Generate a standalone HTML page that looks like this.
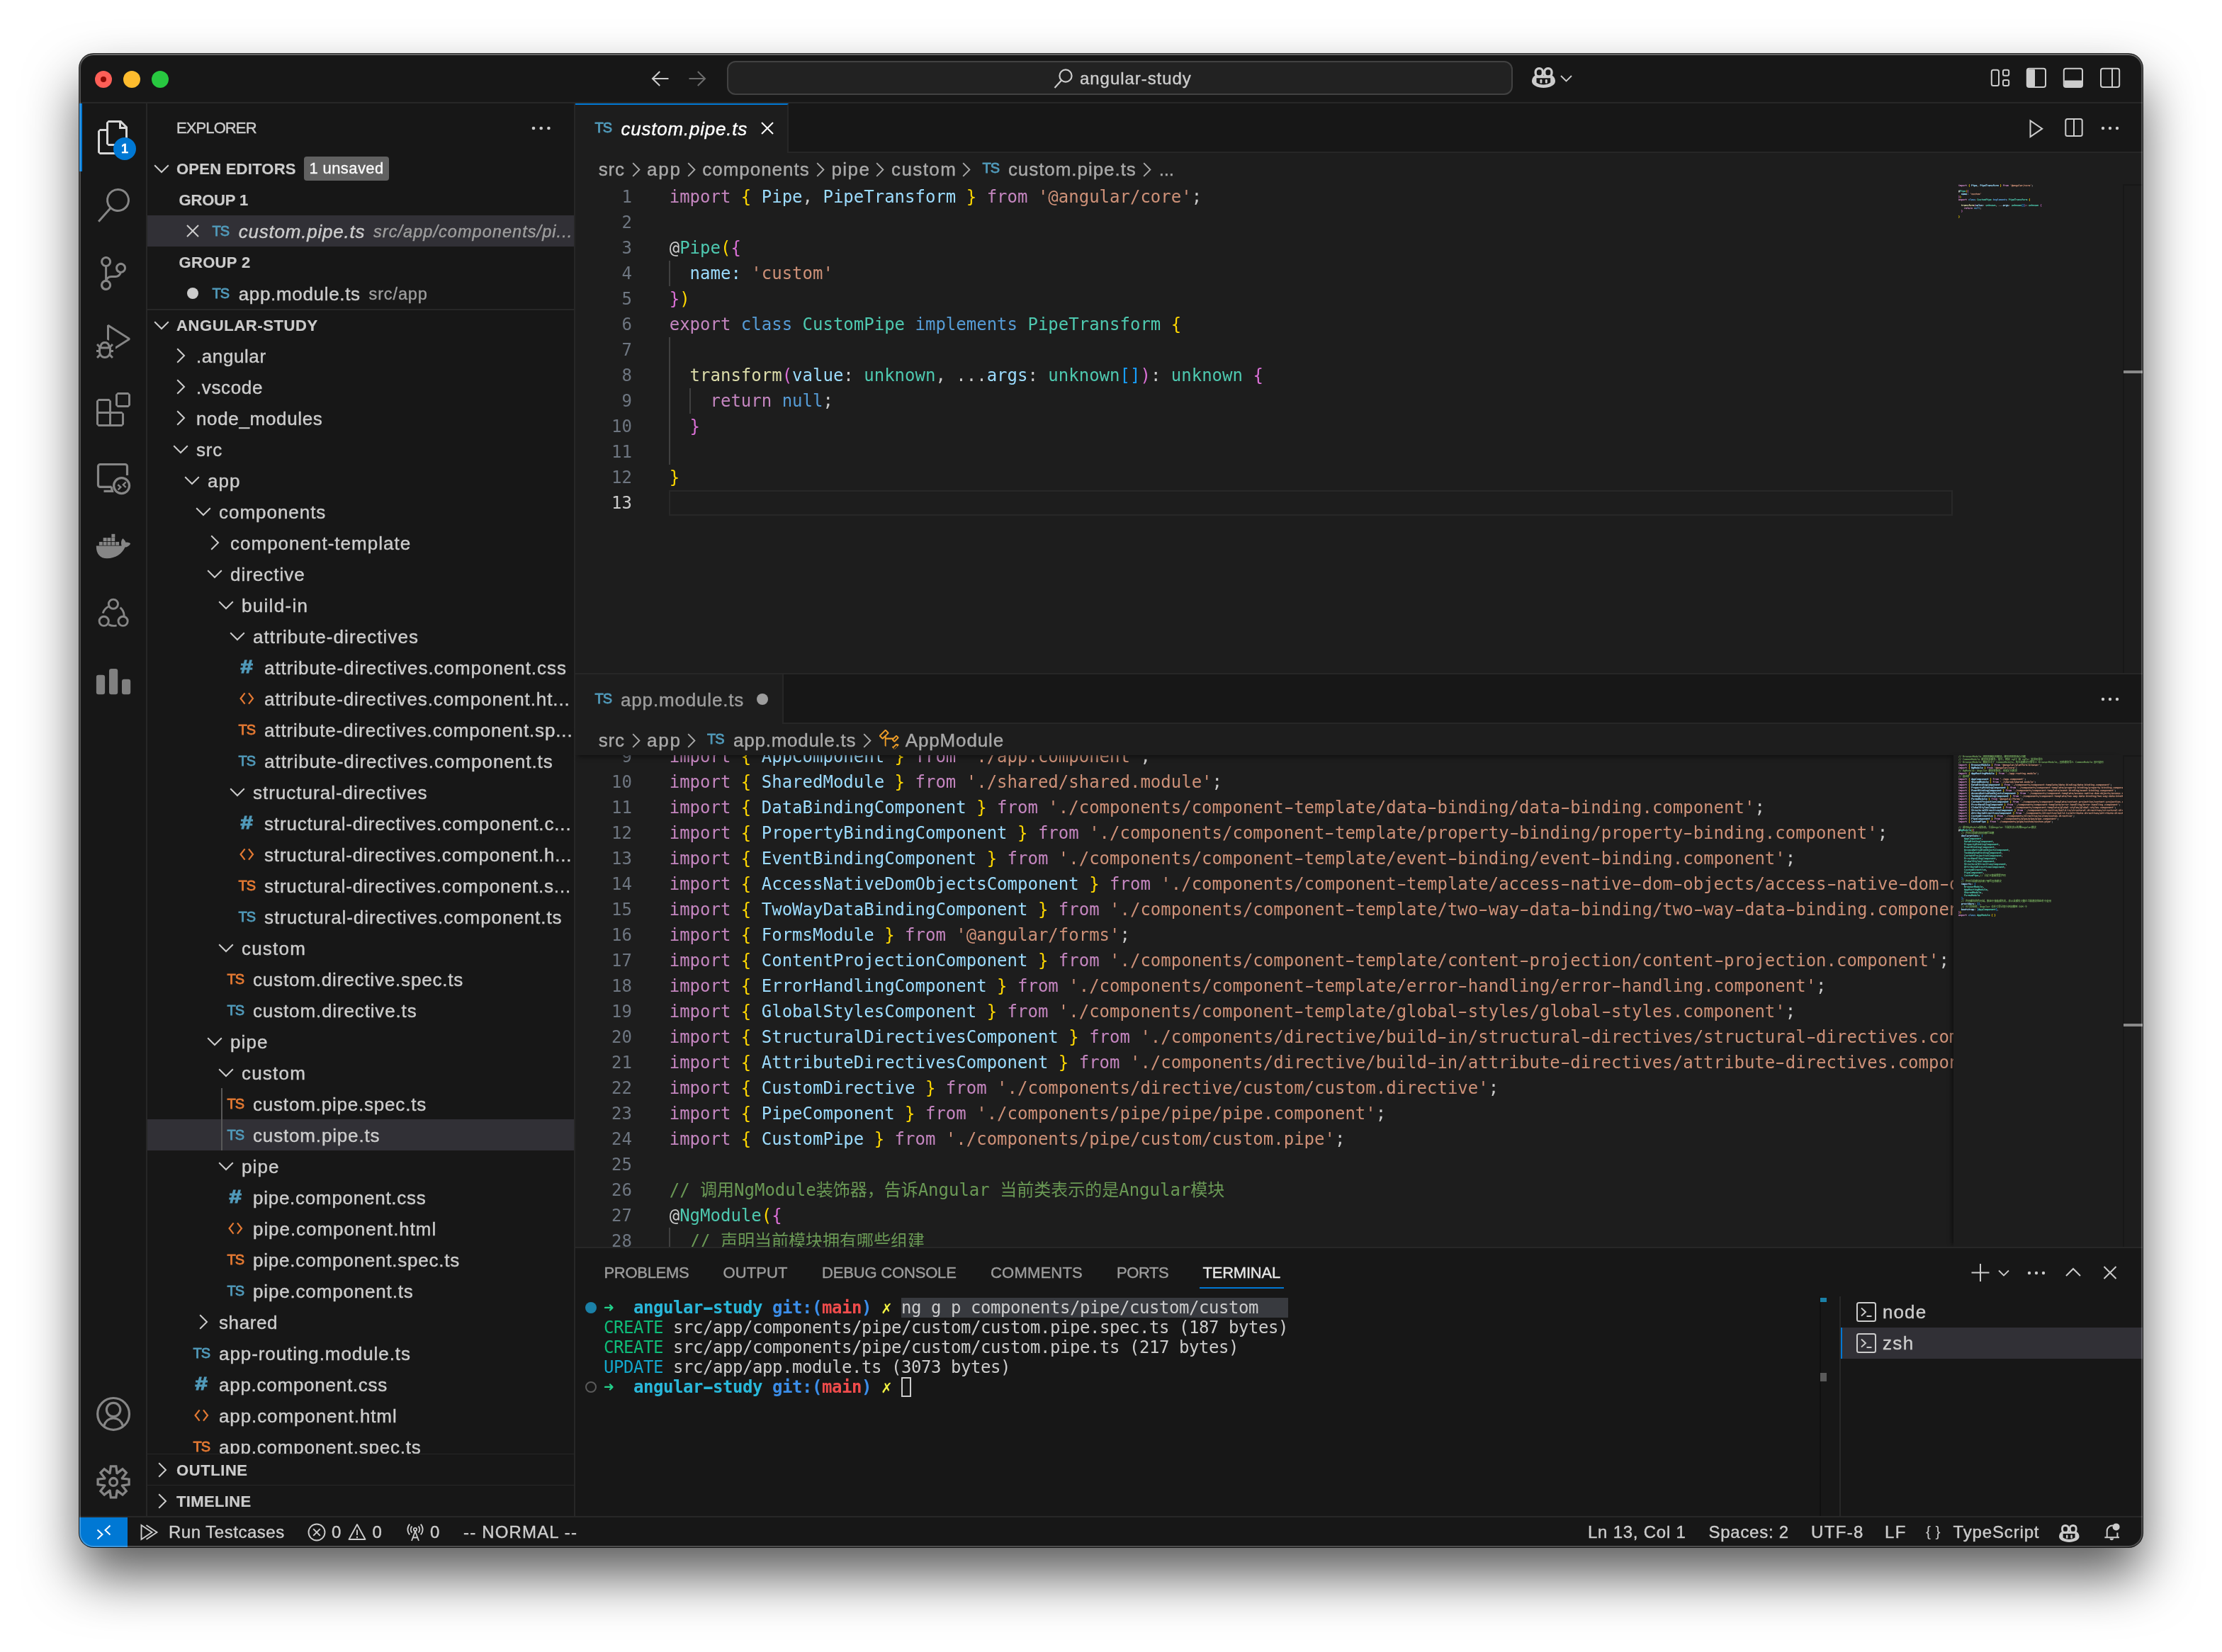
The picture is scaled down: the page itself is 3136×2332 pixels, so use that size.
<!DOCTYPE html><html lang="en"><head><meta charset="utf-8"><title>custom.pipe.ts — angular-study</title><style>
*{box-sizing:border-box;margin:0;padding:0}
html,body{width:3136px;height:2332px;overflow:hidden;background:#fff}
body{font-family:"Liberation Sans",sans-serif;color:#ccc;position:relative;-webkit-text-stroke:.4px}
.mono{-webkit-text-stroke:0}
#win{position:absolute;left:112px;top:76px;width:2912px;height:2108px;border-radius:20px;background:#171717;overflow:hidden;
 box-shadow:0 0 0 1px rgba(0,0,0,.85),0 41px 76px rgba(0,0,0,.64)}
#win:after{content:"";position:absolute;inset:0;border-radius:20px;box-shadow:inset 0 0 0 2px rgba(255,255,255,.24),inset 0 2px 0 0 rgba(255,255,255,.13);pointer-events:none;z-index:50}
#o{position:absolute;left:-112px;top:-76px;width:3136px;height:2332px;will-change:transform}
#o div,#o span.a,#o svg.a{position:absolute}
svg{display:block;overflow:visible}
.mono{font-family:"DejaVu Sans Mono","Noto Sans CJK SC",monospace}
/* title bar */
#tb{left:112px;top:76px;width:2912px;height:70px;border-bottom:2px solid #272727;background:#171717}
.tl{width:24px;height:24px;border-radius:50%;top:100px}
#cc{left:1026px;top:86px;width:1109px;height:48px;border:2px solid #424242;border-radius:12px;background:#222222}
/* activity */
#ab{left:112px;top:146px;width:96px;height:1994px;border-right:2px solid #272727;background:#171717}
/* sidebar */
#sb{left:208px;top:146px;width:604px;height:1994px;background:#171717;border-right:2px solid #272727;overflow:hidden}
.row{left:208px;width:602px;height:44px;line-height:44px;font-size:26px;white-space:nowrap;overflow:hidden}
.row .lb{position:absolute;top:.5px;letter-spacing:.8px;color:#ccc}
.hdr{font-weight:bold;font-size:22px;color:#ccc;letter-spacing:.3px;-webkit-text-stroke:.2px}
.ts{font-size:20px;letter-spacing:-.9px;-webkit-text-stroke:.8px}
.cb{color:#519aba}.co{color:#e37933}
/* editor */
.ed{background:#1d1d1d}
.tabs{background:#171717;border-bottom:2px solid #272727}
.ln{color:#6e7681;text-align:right;width:80px;font-size:24px;line-height:36px;height:36px;white-space:pre}
.cl{font-size:24px;line-height:36px;height:36px;white-space:pre;color:#ccc;}
.k{color:#c586c0}.b1{color:#ffd700}.b2{color:#da70d6}.b3{color:#179fff}.v{color:#9cdcfe}.s{color:#ce9178}.t{color:#4ec9b0}.kw{color:#569cd6}.f{color:#dcdcaa}.c{color:#6a9955}
.bc{margin-top:.8px;font-size:26px;line-height:44px;height:44px;color:#a9a9a9;white-space:nowrap;letter-spacing:.6px}
.ig{width:2px;background:#404040}
/* minimap */
.mm{font-size:3.375px;line-height:4px;white-space:pre;overflow:hidden;-webkit-text-stroke:.18px !important}
.mm div{position:static !important;height:4px}
/* panel */
.pt{font-size:22px;line-height:44px;top:1775px;color:#9d9d9d;letter-spacing:.2px;white-space:nowrap}
.tl2{font-size:24px;line-height:28px;height:28px;white-space:pre;left:824px;color:#ccc}
/* status */
#st{left:112px;top:2140px;width:2912px;height:44px;border-top:2px solid #272727;background:#171717}
.si{top:2142px;font-size:24px;line-height:42px;height:42px;color:#ccc;white-space:nowrap;letter-spacing:.35px}

.hy{display:inline-block;font-style:normal;transform:scaleX(1.65)}

</style></head><body>
<div id="win"><div id="o">
<div id="tb"></div>
<div class="tl" style="left:134px;background:#fe5f57"></div><div style="left:142px;top:108px;width:8px;height:8px;border-radius:50%;background:#8c0a04"></div>
<div class="tl" style="left:174px;background:#febc2e"></div>
<div class="tl" style="left:214px;background:#28c840"></div>
<svg class="a" style="left:918px;top:97px" width="28" height="28" viewBox="0 0 28 28" fill="none" stroke="#cccccc" stroke-width="2.1"><path d="M25.5 14H3.5M13.2 4L3 14L13.2 24"/></svg>
<svg class="a" style="left:970px;top:97px" width="28" height="28" viewBox="0 0 28 28" fill="none" stroke="#6b6b6b" stroke-width="2.1"><path d="M2.5 14H24.5M14.8 4L25 14L14.8 24"/></svg>
<div id="cc"></div>
<svg class="a" style="left:1487px;top:96px" width="28" height="30" viewBox="0 0 28 30" fill="none" stroke="#cccccc" stroke-width="2.2"><circle cx="17" cy="11" r="8.6"/><path d="M11 17.5L1.5 28"/></svg>
<div id="tt" style="left:1524px;top:88px;font-size:24px;line-height:46px;color:#ccc;letter-spacing:.95px;white-space:nowrap">angular-study</div>
<svg class="a" style="left:2161.5px;top:95.3px" width="33" height="29" viewBox="0 0 33 29"><path d="M4.5 11.5C1.2 13.6 0 16.6 0 19.8C0 25 7.6 29 16.5 29C25.4 29 33 25 33 19.8C33 16.6 31.8 13.6 28.5 11.5Z" fill="#ccc"/><path d="M6.5 15.2H26.2V21.6C21.8 25.4 10.9 25.4 6.5 21.6Z" fill="#171717"/><rect x="11.5" y="16.9" width="2.9" height="5.9" rx="1.45" fill="#ccc"/><rect x="18.9" y="16.9" width="2.9" height="5.9" rx="1.45" fill="#ccc"/><rect x="5.2" y="1.7" width="10.2" height="11.2" rx="4.6" fill="#171717" stroke="#ccc" stroke-width="3.3"/><rect x="17.8" y="1.7" width="10.2" height="11.2" rx="4.6" fill="#171717" stroke="#ccc" stroke-width="3.3"/></svg>
<svg class="a" style="left:2202px;top:106px" width="17" height="10" viewBox="0 0 17 10" fill="none" stroke="#ccc" stroke-width="1.8"><path d="M1 1L8.5 8.5L16 1"/></svg>
<svg class="a" style="left:2808px;top:94px" width="186" height="32" viewBox="2808 94 186 32" fill="none" stroke="#ccc" stroke-width="2">
<rect x="2810.8" y="98.8" width="10.2" height="22.2" rx="2.5"/><rect x="2827" y="98.8" width="8.2" height="8" rx="2.2"/><rect x="2827" y="113" width="8.2" height="8" rx="2.2"/>
<rect x="2860.8" y="96.8" width="26.2" height="26.2" rx="3"/><path d="M2861 98.5h10.5v23H2861z" fill="#ccc" stroke-width="1"/>
<rect x="2912.8" y="96.8" width="26.2" height="26.2" rx="3"/><path d="M2914 114h24v8h-24z" fill="#ccc" stroke-width="1"/>
<rect x="2965" y="96.8" width="26.2" height="26.2" rx="3"/><path d="M2981 97v26"/>
</svg>

<div id="ab"></div>
<div style="left:112px;top:146px;width:4px;height:96px;background:#0078d4"></div>
<svg class="a" style="left:136px;top:170px" width="48" height="48" viewBox="0 0 24 24" fill="#d7d7d7"><path d="M17.5 0h-9L7 1.5V6H2.5L1 7.5v15.07L2.5 24h12.07L16 22.57V18h4.7l1.3-1.43V4.5L17.5 0zm0 2.12l2.38 2.38H17.5V2.12zm-3 20.38h-12v-15H7v9.07L8.5 18h6v4.5zm6-6h-12v-15H16V6h4.5v10.5z"/></svg>
<svg class="a" style="left:136px;top:266px" width="48" height="48" viewBox="0 0 24 24" fill="#868686"><path d="M15.25 0a8.25 8.25 0 0 0-6.18 13.72L1 22.88l1.12 1 8.05-9.12A8.251 8.251 0 1 0 15.25.01V0zm0 15a6.75 6.75 0 1 1 0-13.5 6.75 6.75 0 0 1 0 13.5z"/></svg>
<svg class="a" style="left:136px;top:362px" width="48" height="48" viewBox="0 0 24 24" fill="#868686"><path d="M21.007 8.222A3.738 3.738 0 0 0 15.045 5.2a3.737 3.737 0 0 0 1.156 6.583 2.988 2.988 0 0 1-2.668 1.67h-2.99a4.456 4.456 0 0 0-2.989 1.165V7.4a3.737 3.737 0 1 0-1.494 0v9.117a3.776 3.776 0 1 0 1.816.099 2.99 2.99 0 0 1 2.668-1.667h2.99a4.484 4.484 0 0 0 4.223-3.039 3.736 3.736 0 0 0 3.25-3.687zM4.565 3.738a2.242 2.242 0 1 1 4.484 0 2.242 2.242 0 0 1-4.484 0zm4.484 16.441a2.242 2.242 0 1 1-4.484 0 2.242 2.242 0 0 1 4.484 0zm8.221-9.715a2.242 2.242 0 1 1 0-4.485 2.242 2.242 0 0 1 0 4.485z"/></svg>
<svg class="a" style="left:136px;top:458px" width="48" height="48" viewBox="0 0 24 24" fill="#868686"><path d="M10.94 13.5l-1.32 1.32a3.73 3.73 0 0 0-7.24 0L1.06 13.5 0 14.56l1.72 1.72-.22.22V18H0v1.5h1.5v.08c.077.489.214.966.41 1.42L0 22.94 1.06 24l1.65-1.65A4.308 4.308 0 0 0 6 24a4.31 4.31 0 0 0 3.29-1.65L10.94 24 12 22.94 10.09 21c.198-.464.336-.951.41-1.45v-.1H12V18h-1.5v-1.5l-.22-.22L12 14.56l-1.06-1.06zM6 13.5a2.25 2.25 0 0 1 2.25 2.25h-4.5A2.25 2.25 0 0 1 6 13.5zm3 6a3.33 3.33 0 0 1-3 3 3.33 3.33 0 0 1-3-3v-2.25h6v2.25zm14.76-9.9v1.26L13.5 17.37V15.6l8.5-5.37L9 2v9.46a5.07 5.07 0 0 0-1.5-.72V.63L8.64 0l15.12 9.6z"/></svg>
<svg class="a" style="left:136px;top:554px" width="48" height="48" viewBox="0 0 24 24" fill="#868686"><path d="M13.5 1.5L15 0h7.5L24 1.5V9l-1.5 1.5H15L13.5 9V1.5zm1.5 0V9h7.5V1.5H15zM0 15V6l1.5-1.5H9L10.5 6v7.5H18l1.5 1.5v7.5L18 24H1.5L0 22.5V15zm9-1.5V6H1.5v7.5H9zM9 15H1.5v7.5H9V15zm1.5 7.5H18V15h-7.5v7.5z"/></svg>
<div style="left:160px;top:194px;width:32px;height:32px;border-radius:50%;background:#0078d4;color:#fff;font-size:18px;font-weight:bold;line-height:32px;text-align:center">1</div>
<svg class="a" style="left:112px;top:626px" width="96" height="96" viewBox="112 626 96 96" fill="none" stroke="#868686" stroke-width="3.2"><path d="M179.5 671V658.5a3 3 0 0 0-3-3H141.5a3 3 0 0 0-3 3V684.4a3 3 0 0 0 3 3H157.5M146.5 693.4H158.5l-1.5-6"/><circle cx="171.6" cy="685.6" r="11"/><path d="M166.3 684.2L170.3 687.5L166.6 691.5M177.7 680.5L173.8 684.3L177.7 688" stroke-width="2.4"/></svg>
<svg class="a" style="left:112px;top:722px" width="96" height="96" viewBox="112 722 96 96" fill="#868686"><path d="M135.9 770.4L171.6 770.4C170.4 766.2 171 762.5 173.4 760C175.2 761.6 176.9 763.6 177.5 765.7C180.2 765.1 182.6 765.9 184.2 767.4C182.6 770.2 179.6 772.4 176.5 772.6C172 782.2 163 788.3 151 788.3C141 788.3 135.4 781.2 135.9 770.4Z"/><rect x="139.9" y="764.9" width="4.9" height="4.9"/><rect x="145.7" y="764.9" width="4.9" height="4.9"/><rect x="151.5" y="764.9" width="4.9" height="4.9"/><rect x="157.4" y="764.9" width="4.9" height="4.9"/><rect x="163.2" y="764.9" width="4.9" height="4.9"/><rect x="145.7" y="759.1" width="4.9" height="4.9"/><rect x="151.5" y="759.1" width="4.9" height="4.9"/><rect x="157.3" y="759.1" width="4.9" height="4.9"/><rect x="157.4" y="753.8" width="4.9" height="4.9"/></svg>
<svg class="a" style="left:112px;top:818px" width="96" height="96" viewBox="112 818 96 96" fill="none" stroke="#868686" stroke-width="2.9"><circle cx="159.9" cy="852.7" r="6.6"/><circle cx="146.7" cy="876.8" r="6.6"/><circle cx="173.6" cy="876.8" r="6.6"/><path d="M153 856.2A15.5 15.5 0 0 0 145.2 865.6M169.6 857.6A15.5 15.5 0 0 1 175.2 869.2M153.4 881.6A15.5 15.5 0 0 0 164.6 882.8"/></svg>
<svg class="a" style="left:112px;top:914px" width="96" height="96" viewBox="112 914 96 96" fill="#808080"><rect x="135.9" y="952.8" width="12.2" height="27.4" rx="3.2"/><rect x="154" y="943.9" width="12.2" height="36.3" rx="3.2"/><rect x="172" y="958.7" width="12.2" height="21.5" rx="3.2"/></svg>
<svg class="a" style="left:112px;top:1948px" width="96" height="96" viewBox="112 1948 96 96" fill="none" stroke="#868686" stroke-width="3.2"><circle cx="160.1" cy="1995.9" r="22.4"/><circle cx="160.1" cy="1990" r="9.7"/><path d="M146.6 2013.2C148.5 2006.4 153.6 2002 160.1 2002C166.6 2002 171.7 2006.4 173.6 2013.2"/></svg>
<svg class="a" style="left:112px;top:2044px" width="96" height="96" viewBox="112 2044 96 96" fill="none" stroke="#868686" stroke-width="3.3" stroke-linejoin="miter"><path d="M155.1 2079.5 L156.4 2069.9 L163.8 2069.9 L165.1 2079.5 L165.4 2079.6 L173.0 2073.7 L178.3 2079.0 L172.4 2086.6 L172.5 2086.9 L182.1 2088.2 L182.1 2095.6 L172.5 2096.9 L172.4 2097.2 L178.3 2104.8 L173.0 2110.1 L165.4 2104.2 L165.1 2104.3 L163.8 2113.9 L156.4 2113.9 L155.1 2104.3 L154.8 2104.2 L147.2 2110.1 L141.9 2104.8 L147.8 2097.2 L147.7 2096.9 L138.1 2095.6 L138.1 2088.2 L147.7 2086.9 L147.8 2086.6 L141.9 2079.0 L147.2 2073.7 L154.8 2079.6Z"/><circle cx="160.1" cy="2091.9" r="5.4"/></svg>
<div id="sb"></div>
<div id="sh0" style="left:249px;top:146px;height:70px;line-height:70px;font-size:22px;color:#ccc;letter-spacing:-0.9px;white-space:nowrap">EXPLORER</div>
<svg class="a" style="left:748px;top:176px" width="32" height="10" viewBox="0 0 32 10" fill="#ccc"><circle cx="5" cy="5" r="2.3"/><circle cx="15.7" cy="5" r="2.3"/><circle cx="26.4" cy="5" r="2.3"/></svg>
<div class="row hdr" style="top:216px"><span class="lb" id="sh1" style="left:41px;letter-spacing:0.234px">OPEN EDITORS</span></div>
<svg class="a" style="left:217px;top:231.5px" width="22" height="13" viewBox="0 0 22 13" fill="none" stroke="#ccc" stroke-width="2"><path d="M1.2 1.2L11 11L20.8 1.2"/></svg>
<div style="left:429px;top:221px;width:120px;height:34px;border-radius:4px;background:#616161;color:#f8f8f8;font-size:22px;line-height:34px;text-align:center;letter-spacing:.4px;white-space:nowrap">1 unsaved</div>
<div class="row hdr" style="top:260px"><span class="lb" id="sh2" style="left:44.5px;letter-spacing:-0.167px">GROUP 1</span></div>
<div class="row" style="top:304px;background:#313036"><span class="lb" id="oe0" style="left:128.7px;font-style:italic;letter-spacing:0.784px">custom.pipe.ts</span><span class="lb" id="oe1" style="left:319px;font-style:italic;font-size:23.5px;color:#9d9d9d;letter-spacing:1.055px;top:1px">src/app/components/pi...</span></div>
<svg class="a" style="left:263px;top:317px" width="18" height="18" viewBox="0 0 18 18" fill="none" stroke="#ccc" stroke-width="2"><path d="M1 1L17 17M17 1L1 17"/></svg>
<span class="a ts cb" style="left:299.5px;top:304px;line-height:44px">TS</span>
<div class="row hdr" style="top:348px"><span class="lb" id="sh3" style="left:44.5px;letter-spacing:0.333px">GROUP 2</span></div>
<div class="row" style="top:392px"><span class="lb" id="oe2" style="left:128.7px;letter-spacing:0.675px">app.module.ts</span><span class="lb" id="oe3" style="left:312.5px;font-size:23.5px;color:#9d9d9d;top:1px;letter-spacing:0.883px">src/app</span></div>
<div style="left:264px;top:406px;width:16px;height:16px;border-radius:50%;background:#ccc"></div>
<span class="a ts cb" style="left:299.5px;top:392px;line-height:44px">TS</span>
<div style="left:208px;top:436px;width:602px;height:2px;background:#272727"></div>
<div class="row hdr" style="top:437px"><span class="lb" id="sh4" style="left:41px;letter-spacing:0.609px">ANGULAR-STUDY</span></div>
<svg class="a" style="left:217px;top:452.5px" width="22" height="13" viewBox="0 0 22 13" fill="none" stroke="#ccc" stroke-width="2"><path d="M1.2 1.2L11 11L20.8 1.2"/></svg>
<div style="left:208px;top:480px;width:602px;height:1572px;overflow:hidden"><div style="left:-208px;top:-480px;width:900px;height:2200px">
<div class="row" style="top:480px"><span class="lb" id="tr0" style="left:69px;letter-spacing:0.585px">.angular</span></div>
<svg class="a" style="left:248.5px;top:491px" width="13" height="22" viewBox="0 0 13 22" fill="none" stroke="#ccc" stroke-width="2"><path d="M1.2 1.2L11 11L1.2 20.8"/></svg>
<div class="row" style="top:524px"><span class="lb" id="tr1" style="left:69px;letter-spacing:0.633px">.vscode</span></div>
<svg class="a" style="left:248.5px;top:535px" width="13" height="22" viewBox="0 0 13 22" fill="none" stroke="#ccc" stroke-width="2"><path d="M1.2 1.2L11 11L1.2 20.8"/></svg>
<div class="row" style="top:568px"><span class="lb" id="tr2" style="left:69px;letter-spacing:0.662px">node_modules</span></div>
<svg class="a" style="left:248.5px;top:579px" width="13" height="22" viewBox="0 0 13 22" fill="none" stroke="#ccc" stroke-width="2"><path d="M1.2 1.2L11 11L1.2 20.8"/></svg>
<div class="row" style="top:612px"><span class="lb" id="tr3" style="left:69px;letter-spacing:0.8px">src</span></div>
<svg class="a" style="left:243.5px;top:627.5px" width="22" height="13" viewBox="0 0 22 13" fill="none" stroke="#ccc" stroke-width="2"><path d="M1.2 1.2L11 11L20.8 1.2"/></svg>
<div class="row" style="top:656px"><span class="lb" id="tr4" style="left:85px;letter-spacing:1.05px">app</span></div>
<svg class="a" style="left:259.5px;top:671.5px" width="22" height="13" viewBox="0 0 22 13" fill="none" stroke="#ccc" stroke-width="2"><path d="M1.2 1.2L11 11L20.8 1.2"/></svg>
<div class="row" style="top:700px"><span class="lb" id="tr5" style="left:101px;letter-spacing:0.968px">components</span></div>
<svg class="a" style="left:275.5px;top:715.5px" width="22" height="13" viewBox="0 0 22 13" fill="none" stroke="#ccc" stroke-width="2"><path d="M1.2 1.2L11 11L20.8 1.2"/></svg>
<div class="row" style="top:744px"><span class="lb" id="tr6" style="left:117px;letter-spacing:1.006px">component-template</span></div>
<svg class="a" style="left:296.5px;top:755px" width="13" height="22" viewBox="0 0 13 22" fill="none" stroke="#ccc" stroke-width="2"><path d="M1.2 1.2L11 11L1.2 20.8"/></svg>
<div class="row" style="top:788px"><span class="lb" id="tr7" style="left:117px;letter-spacing:0.985px">directive</span></div>
<svg class="a" style="left:291.5px;top:803.5px" width="22" height="13" viewBox="0 0 22 13" fill="none" stroke="#ccc" stroke-width="2"><path d="M1.2 1.2L11 11L20.8 1.2"/></svg>
<div class="row" style="top:832px"><span class="lb" id="tr8" style="left:133px;letter-spacing:1.301px">build-in</span></div>
<svg class="a" style="left:307.5px;top:847.5px" width="22" height="13" viewBox="0 0 22 13" fill="none" stroke="#ccc" stroke-width="2"><path d="M1.2 1.2L11 11L20.8 1.2"/></svg>
<div class="row" style="top:876px"><span class="lb" id="tr9" style="left:149px;letter-spacing:1.088px">attribute-directives</span></div>
<svg class="a" style="left:323.5px;top:891.5px" width="22" height="13" viewBox="0 0 22 13" fill="none" stroke="#ccc" stroke-width="2"><path d="M1.2 1.2L11 11L20.8 1.2"/></svg>
<div class="row" style="top:920px"><span class="lb" id="tr10" style="left:165px;letter-spacing:0.951px">attribute-directives.component.css</span></div>
<span class="a cb" style="left:338.5px;top:919px;line-height:44px;font-size:25px;font-weight:bold;font-style:italic;-webkit-text-stroke:1.1px;transform:scaleX(1.25);transform-origin:0 50%">#</span>
<div class="row" style="top:964px"><span class="lb" id="tr11" style="left:165px;letter-spacing:0.913px">attribute-directives.component.ht...</span></div>
<svg class="a" style="left:338px;top:977px" width="22" height="18" viewBox="0 0 22 18" fill="none" stroke="#e37933" stroke-width="2.2"><path d="M7.6 1.4L1.6 9L7.6 16.6M13 1.4L19 9L13 16.6"/></svg>
<div class="row" style="top:1008px"><span class="lb" id="tr12" style="left:165px;letter-spacing:0.857px">attribute-directives.component.sp...</span></div>
<span class="a ts co" style="left:336.5px;top:1008px;line-height:44px">TS</span>
<div class="row" style="top:1052px"><span class="lb" id="tr13" style="left:165px;letter-spacing:0.971px">attribute-directives.component.ts</span></div>
<span class="a ts cb" style="left:336.5px;top:1052px;line-height:44px">TS</span>
<div class="row" style="top:1096px"><span class="lb" id="tr14" style="left:149px;letter-spacing:1.0px">structural-directives</span></div>
<svg class="a" style="left:323.5px;top:1111.5px" width="22" height="13" viewBox="0 0 22 13" fill="none" stroke="#ccc" stroke-width="2"><path d="M1.2 1.2L11 11L20.8 1.2"/></svg>
<div class="row" style="top:1140px"><span class="lb" id="tr15" style="left:165px;letter-spacing:0.842px">structural-directives.component.c...</span></div>
<span class="a cb" style="left:338.5px;top:1139px;line-height:44px;font-size:25px;font-weight:bold;font-style:italic;-webkit-text-stroke:1.1px;transform:scaleX(1.25);transform-origin:0 50%">#</span>
<div class="row" style="top:1184px"><span class="lb" id="tr16" style="left:165px;letter-spacing:0.827px">structural-directives.component.h...</span></div>
<svg class="a" style="left:338px;top:1197px" width="22" height="18" viewBox="0 0 22 18" fill="none" stroke="#e37933" stroke-width="2.2"><path d="M7.6 1.4L1.6 9L7.6 16.6M13 1.4L19 9L13 16.6"/></svg>
<div class="row" style="top:1228px"><span class="lb" id="tr17" style="left:165px;letter-spacing:0.829px">structural-directives.component.s...</span></div>
<span class="a ts co" style="left:336.5px;top:1228px;line-height:44px">TS</span>
<div class="row" style="top:1272px"><span class="lb" id="tr18" style="left:165px;letter-spacing:0.936px">structural-directives.component.ts</span></div>
<span class="a ts cb" style="left:336.5px;top:1272px;line-height:44px">TS</span>
<div class="row" style="top:1316px"><span class="lb" id="tr19" style="left:133px;letter-spacing:1.2px">custom</span></div>
<svg class="a" style="left:307.5px;top:1331.5px" width="22" height="13" viewBox="0 0 22 13" fill="none" stroke="#ccc" stroke-width="2"><path d="M1.2 1.2L11 11L20.8 1.2"/></svg>
<div class="row" style="top:1360px"><span class="lb" id="tr20" style="left:149px;letter-spacing:0.823px">custom.directive.spec.ts</span></div>
<span class="a ts co" style="left:320.5px;top:1360px;line-height:44px">TS</span>
<div class="row" style="top:1404px"><span class="lb" id="tr21" style="left:149px;letter-spacing:0.856px">custom.directive.ts</span></div>
<span class="a ts cb" style="left:320.5px;top:1404px;line-height:44px">TS</span>
<div class="row" style="top:1448px"><span class="lb" id="tr22" style="left:117px;letter-spacing:1.133px">pipe</span></div>
<svg class="a" style="left:291.5px;top:1463.5px" width="22" height="13" viewBox="0 0 22 13" fill="none" stroke="#ccc" stroke-width="2"><path d="M1.2 1.2L11 11L20.8 1.2"/></svg>
<div class="row" style="top:1492px"><span class="lb" id="tr23" style="left:133px;letter-spacing:1.2px">custom</span></div>
<svg class="a" style="left:307.5px;top:1507.5px" width="22" height="13" viewBox="0 0 22 13" fill="none" stroke="#ccc" stroke-width="2"><path d="M1.2 1.2L11 11L20.8 1.2"/></svg>
<div class="row" style="top:1536px"><span class="lb" id="tr24" style="left:149px;letter-spacing:0.8px">custom.pipe.spec.ts</span></div>
<span class="a ts co" style="left:320.5px;top:1536px;line-height:44px">TS</span>
<div class="row" style="top:1580px;background:#313036"><span class="lb" id="tr25" style="left:149px;letter-spacing:0.838px">custom.pipe.ts</span></div>
<span class="a ts cb" style="left:320.5px;top:1580px;line-height:44px">TS</span>
<div class="row" style="top:1624px"><span class="lb" id="tr26" style="left:133px;letter-spacing:1.134px">pipe</span></div>
<svg class="a" style="left:307.5px;top:1639.5px" width="22" height="13" viewBox="0 0 22 13" fill="none" stroke="#ccc" stroke-width="2"><path d="M1.2 1.2L11 11L20.8 1.2"/></svg>
<div class="row" style="top:1668px"><span class="lb" id="tr27" style="left:149px;letter-spacing:0.739px">pipe.component.css</span></div>
<span class="a cb" style="left:322.5px;top:1667px;line-height:44px;font-size:25px;font-weight:bold;font-style:italic;-webkit-text-stroke:1.1px;transform:scaleX(1.25);transform-origin:0 50%">#</span>
<div class="row" style="top:1712px"><span class="lb" id="tr28" style="left:149px;letter-spacing:0.938px">pipe.component.html</span></div>
<svg class="a" style="left:322px;top:1725px" width="22" height="18" viewBox="0 0 22 18" fill="none" stroke="#e37933" stroke-width="2.2"><path d="M7.6 1.4L1.6 9L7.6 16.6M13 1.4L19 9L13 16.6"/></svg>
<div class="row" style="top:1756px"><span class="lb" id="tr29" style="left:149px;letter-spacing:0.798px">pipe.component.spec.ts</span></div>
<span class="a ts co" style="left:320.5px;top:1756px;line-height:44px">TS</span>
<div class="row" style="top:1800px"><span class="lb" id="tr30" style="left:149px;letter-spacing:0.83px">pipe.component.ts</span></div>
<span class="a ts cb" style="left:320.5px;top:1800px;line-height:44px">TS</span>
<div class="row" style="top:1844px"><span class="lb" id="tr31" style="left:101px;letter-spacing:0.6px">shared</span></div>
<svg class="a" style="left:280.5px;top:1855px" width="13" height="22" viewBox="0 0 13 22" fill="none" stroke="#ccc" stroke-width="2"><path d="M1.2 1.2L11 11L1.2 20.8"/></svg>
<div class="row" style="top:1888px"><span class="lb" id="tr32" style="left:101px;letter-spacing:0.925px">app-routing.module.ts</span></div>
<span class="a ts cb" style="left:272.5px;top:1888px;line-height:44px">TS</span>
<div class="row" style="top:1932px"><span class="lb" id="tr33" style="left:101px;letter-spacing:0.738px">app.component.css</span></div>
<span class="a cb" style="left:274.5px;top:1931px;line-height:44px;font-size:25px;font-weight:bold;font-style:italic;-webkit-text-stroke:1.1px;transform:scaleX(1.25);transform-origin:0 50%">#</span>
<div class="row" style="top:1976px"><span class="lb" id="tr34" style="left:101px;letter-spacing:0.888px">app.component.html</span></div>
<svg class="a" style="left:274px;top:1989px" width="22" height="18" viewBox="0 0 22 18" fill="none" stroke="#e37933" stroke-width="2.2"><path d="M7.6 1.4L1.6 9L7.6 16.6M13 1.4L19 9L13 16.6"/></svg>
<div class="row" style="top:2020px"><span class="lb" id="tr35" style="left:101px;letter-spacing:0.8px">app.component.spec.ts</span></div>
<span class="a ts co" style="left:272.5px;top:2020px;line-height:44px">TS</span>
<div style="left:312px;top:1536px;width:2px;height:88px;background:#585858"></div>
</div></div>
<div style="left:208px;top:2052px;width:602px;height:2px;background:#272727"></div>
<div class="row hdr" style="top:2053px;background:#171717"><span class="lb" id="sh_OUTLINE" style="left:41px;letter-spacing:0.583px">OUTLINE</span></div>
<svg class="a" style="left:222.5px;top:2064px" width="13" height="22" viewBox="0 0 13 22" fill="none" stroke="#ccc" stroke-width="2"><path d="M1.2 1.2L11 11L1.2 20.8"/></svg>
<div style="left:208px;top:2096px;width:602px;height:2px;background:#272727"></div>
<div class="row hdr" style="top:2097px;background:#171717"><span class="lb" id="sh_TIMELINE" style="left:41px;letter-spacing:0.357px">TIMELINE</span></div>
<svg class="a" style="left:222.5px;top:2108px" width="13" height="22" viewBox="0 0 13 22" fill="none" stroke="#ccc" stroke-width="2"><path d="M1.2 1.2L11 11L1.2 20.8"/></svg>
<div class="ed" style="left:812px;top:146px;width:2212px;height:1616px"></div>
<div class="tabs" style="left:812px;top:146px;width:2212px;height:70px"></div>
<div style="left:812px;top:146px;width:301px;height:70px;background:#1d1d1d;border-top:2px solid #0078d4;border-right:2px solid #272727"></div>
<span class="a" style="left:839.5px;top:146px;line-height:68px;color:#519aba;font-size:20px;letter-spacing:-.9px;-webkit-text-stroke:.8px">TS</span>
<div id="tb1" style="left:876.5px;top:147px;line-height:70px;font-size:26px;font-style:italic;color:#fff;letter-spacing:0.788px;white-space:nowrap">custom.pipe.ts</div>
<svg class="a" style="left:1074px;top:172px" width="18" height="18" viewBox="0 0 18 18" fill="none" stroke="#fff" stroke-width="2"><path d="M1 1L17 17M17 1L1 17"/></svg>
<svg class="a" style="left:2860px;top:164px" width="136" height="34" viewBox="2860 164 136 34" fill="none" stroke="#ccc" stroke-width="2"><path d="M2865.5 170.3V193L2882.2 181.7Z" stroke-linejoin="miter"/><rect x="2915.3" y="168" width="23.4" height="24" rx="2.5"/><path d="M2927 168v24"/><g fill="#ccc" stroke="none"><circle cx="2968" cy="181" r="2.2"/><circle cx="2978" cy="181" r="2.2"/><circle cx="2988" cy="181" r="2.2"/></g></svg>
<div class="bc" id="b1a" style="left:844.7px;top:216px;letter-spacing:0.85px;">src</div>
<div class="bc" id="b1b" style="left:913px;top:216px;letter-spacing:1.85px;">app</div>
<div class="bc" id="b1c" style="left:991.2px;top:216px;letter-spacing:0.989px;">components</div>
<div class="bc" id="b1d" style="left:1173.4px;top:216px;letter-spacing:1.433px;">pipe</div>
<div class="bc" id="b1e" style="left:1258px;top:216px;letter-spacing:1.4px;">custom</div>
<div class="bc" id="b1f" style="left:1422.9px;top:216px;letter-spacing:0.947px;">custom.pipe.ts</div>
<div class="bc" id="b1g" style="left:1635.7px;top:216px;letter-spacing:-0.15px;">...</div>
<svg class="a" style="left:891.9px;top:228.5px" width="12" height="21" viewBox="0 0 12 21" fill="none" stroke="#a9a9a9" stroke-width="1.9"><path d="M1.2 1.2L10.4 10.5L1.2 19.8"/></svg>
<svg class="a" style="left:969.6px;top:228.5px" width="12" height="21" viewBox="0 0 12 21" fill="none" stroke="#a9a9a9" stroke-width="1.9"><path d="M1.2 1.2L10.4 10.5L1.2 19.8"/></svg>
<svg class="a" style="left:1151.8px;top:228.5px" width="12" height="21" viewBox="0 0 12 21" fill="none" stroke="#a9a9a9" stroke-width="1.9"><path d="M1.2 1.2L10.4 10.5L1.2 19.8"/></svg>
<svg class="a" style="left:1236px;top:228.5px" width="12" height="21" viewBox="0 0 12 21" fill="none" stroke="#a9a9a9" stroke-width="1.9"><path d="M1.2 1.2L10.4 10.5L1.2 19.8"/></svg>
<svg class="a" style="left:1357.7px;top:228.5px" width="12" height="21" viewBox="0 0 12 21" fill="none" stroke="#a9a9a9" stroke-width="1.9"><path d="M1.2 1.2L10.4 10.5L1.2 19.8"/></svg>
<svg class="a" style="left:1613px;top:228.5px" width="12" height="21" viewBox="0 0 12 21" fill="none" stroke="#a9a9a9" stroke-width="1.9"><path d="M1.2 1.2L10.4 10.5L1.2 19.8"/></svg>
<span class="a" style="left:1386.5px;top:215px;line-height:44px;color:#519aba;font-size:20px;letter-spacing:-.9px;-webkit-text-stroke:.8px">TS</span>
<div style="left:944px;top:692px;width:1812px;height:36px;border:2px solid #282828"></div>
<div class="ln mono" style="left:812px;top:260px;color:#6e7681">1</div>
<div class="cl mono" style="left:944.7px;top:260px"><span class="k">import</span> <span class="b1">{</span> <span class="v">Pipe</span>, <span class="v">PipeTransform</span> <span class="b1">}</span> <span class="k">from</span> <span class="s">'@angular/core'</span>;</div>
<div class="ln mono" style="left:812px;top:296px;color:#6e7681">2</div>
<div class="ln mono" style="left:812px;top:332px;color:#6e7681">3</div>
<div class="cl mono" style="left:944.7px;top:332px">@<span class="t">Pipe</span><span class="b1">(</span><span class="b2">{</span></div>
<div class="ln mono" style="left:812px;top:368px;color:#6e7681">4</div>
<div class="cl mono" style="left:944.7px;top:368px">  <span class="v">name</span><span class="v">:</span> <span class="s">'custom'</span></div>
<div class="ln mono" style="left:812px;top:404px;color:#6e7681">5</div>
<div class="cl mono" style="left:944.7px;top:404px"><span class="b2">}</span><span class="b1">)</span></div>
<div class="ln mono" style="left:812px;top:440px;color:#6e7681">6</div>
<div class="cl mono" style="left:944.7px;top:440px"><span class="k">export</span> <span class="kw">class</span> <span class="t">CustomPipe</span> <span class="kw">implements</span> <span class="t">PipeTransform</span> <span class="b1">{</span></div>
<div class="ln mono" style="left:812px;top:476px;color:#6e7681">7</div>
<div class="ln mono" style="left:812px;top:512px;color:#6e7681">8</div>
<div class="cl mono" style="left:944.7px;top:512px">  <span class="f">transform</span><span class="b2">(</span><span class="v">value</span>: <span class="t">unknown</span>, ...<span class="v">args</span>: <span class="t">unknown</span><span class="b3">[]</span><span class="b2">)</span>: <span class="t">unknown</span> <span class="b2">{</span></div>
<div class="ln mono" style="left:812px;top:548px;color:#6e7681">9</div>
<div class="cl mono" style="left:944.7px;top:548px">    <span class="k">return</span> <span class="kw">null</span>;</div>
<div class="ln mono" style="left:812px;top:584px;color:#6e7681">10</div>
<div class="cl mono" style="left:944.7px;top:584px">  <span class="b2">}</span></div>
<div class="ln mono" style="left:812px;top:620px;color:#6e7681">11</div>
<div class="ln mono" style="left:812px;top:656px;color:#6e7681">12</div>
<div class="cl mono" style="left:944.7px;top:656px"><span class="b1">}</span></div>
<div class="ln mono" style="left:812px;top:692px;color:#ccc">13</div>
<div class="ig" style="left:944px;top:368px;height:36px"></div>
<div class="ig" style="left:944px;top:476px;height:180px"></div>
<div class="ig" style="left:973px;top:548px;height:36px"></div>
<div class="mm mono" style="left:2764px;top:260px;width:232px;height:60px"><div><span class="k">import</span> <span class="b1">{</span> <span class="v">Pipe</span>, <span class="v">PipeTransform</span> <span class="b1">}</span> <span class="k">from</span> <span class="s">'@angular/core'</span>;</div><div> </div><div>@<span class="t">Pipe</span><span class="b1">(</span><span class="b2">{</span></div><div>  <span class="v">name</span><span class="v">:</span> <span class="s">'custom'</span></div><div><span class="b2">}</span><span class="b1">)</span></div><div><span class="k">export</span> <span class="kw">class</span> <span class="t">CustomPipe</span> <span class="kw">implements</span> <span class="t">PipeTransform</span> <span class="b1">{</span></div><div> </div><div>  <span class="f">transform</span><span class="b2">(</span><span class="v">value</span>: <span class="t">unknown</span>, ...<span class="v">args</span>: <span class="t">unknown</span><span class="b3">[]</span><span class="b2">)</span>: <span class="t">unknown</span> <span class="b2">{</span></div><div>    <span class="k">return</span> <span class="kw">null</span>;</div><div>  <span class="b2">}</span></div><div> </div><div><span class="b1">}</span></div><div> </div></div>
<div style="left:2996px;top:260px;width:28px;height:690px;border-left:2px solid #171717;border-top:2px solid #171717"></div>
<div style="left:2997px;top:523px;width:27px;height:4px;background:#8a8a8a"></div>
<div style="left:812px;top:950px;width:2212px;height:2px;background:#272727"></div>
<div class="tabs" style="left:812px;top:952px;width:2212px;height:70px"></div>
<div style="left:812px;top:952px;width:294px;height:70px;background:#1d1d1d;border-right:2px solid #272727"></div>
<span class="a" style="left:839.5px;top:952px;line-height:68px;color:#519aba;font-size:20px;letter-spacing:-.9px;-webkit-text-stroke:.8px">TS</span>
<div id="tb2" style="left:876px;top:953px;line-height:70px;font-size:26px;color:#9d9d9d;letter-spacing:0.833px;white-space:nowrap">app.module.ts</div>
<div style="left:1068px;top:979px;width:16px;height:16px;border-radius:50%;background:#9d9d9d"></div>
<svg class="a" style="left:2964px;top:983px" width="30" height="8" viewBox="2964 983 30 8" fill="#ccc"><circle cx="2968" cy="987" r="2.2"/><circle cx="2978" cy="987" r="2.2"/><circle cx="2988" cy="987" r="2.2"/></svg>
<div style="left:812px;top:1066px;width:1945px;height:694px;overflow:hidden"><div style="left:-812px;top:-1066px;width:3136px;height:2332px">
<div class="ln mono" style="left:812px;top:1050px">9</div>
<div class="cl mono" style="left:944.7px;top:1050px"><span class="k">import</span> <span class="b1">{</span> <span class="v">AppComponent</span> <span class="b1">}</span> <span class="k">from</span> <span class="s">'./app.component'</span>;</div>
<div class="ln mono" style="left:812px;top:1086px">10</div>
<div class="cl mono" style="left:944.7px;top:1086px"><span class="k">import</span> <span class="b1">{</span> <span class="v">SharedModule</span> <span class="b1">}</span> <span class="k">from</span> <span class="s">'./shared/shared.module'</span>;</div>
<div class="ln mono" style="left:812px;top:1122px">11</div>
<div class="cl mono" style="left:944.7px;top:1122px"><span class="k">import</span> <span class="b1">{</span> <span class="v">DataBindingComponent</span> <span class="b1">}</span> <span class="k">from</span> <span class="s">'./components/component<i class="hy">-</i>template/data<i class="hy">-</i>binding/data<i class="hy">-</i>binding.component'</span>;</div>
<div class="ln mono" style="left:812px;top:1158px">12</div>
<div class="cl mono" style="left:944.7px;top:1158px"><span class="k">import</span> <span class="b1">{</span> <span class="v">PropertyBindingComponent</span> <span class="b1">}</span> <span class="k">from</span> <span class="s">'./components/component<i class="hy">-</i>template/property<i class="hy">-</i>binding/property<i class="hy">-</i>binding.component'</span>;</div>
<div class="ln mono" style="left:812px;top:1194px">13</div>
<div class="cl mono" style="left:944.7px;top:1194px"><span class="k">import</span> <span class="b1">{</span> <span class="v">EventBindingComponent</span> <span class="b1">}</span> <span class="k">from</span> <span class="s">'./components/component<i class="hy">-</i>template/event<i class="hy">-</i>binding/event<i class="hy">-</i>binding.component'</span>;</div>
<div class="ln mono" style="left:812px;top:1230px">14</div>
<div class="cl mono" style="left:944.7px;top:1230px"><span class="k">import</span> <span class="b1">{</span> <span class="v">AccessNativeDomObjectsComponent</span> <span class="b1">}</span> <span class="k">from</span> <span class="s">'./components/component<i class="hy">-</i>template/access<i class="hy">-</i>native<i class="hy">-</i>dom<i class="hy">-</i>objects/access<i class="hy">-</i>native<i class="hy">-</i>dom<i class="hy">-</i>objects.component'</span>;</div>
<div class="ln mono" style="left:812px;top:1266px">15</div>
<div class="cl mono" style="left:944.7px;top:1266px"><span class="k">import</span> <span class="b1">{</span> <span class="v">TwoWayDataBindingComponent</span> <span class="b1">}</span> <span class="k">from</span> <span class="s">'./components/component<i class="hy">-</i>template/two<i class="hy">-</i>way<i class="hy">-</i>data<i class="hy">-</i>binding/two<i class="hy">-</i>way<i class="hy">-</i>data<i class="hy">-</i>binding.component'</span>;</div>
<div class="ln mono" style="left:812px;top:1302px">16</div>
<div class="cl mono" style="left:944.7px;top:1302px"><span class="k">import</span> <span class="b1">{</span> <span class="v">FormsModule</span> <span class="b1">}</span> <span class="k">from</span> <span class="s">'@angular/forms'</span>;</div>
<div class="ln mono" style="left:812px;top:1338px">17</div>
<div class="cl mono" style="left:944.7px;top:1338px"><span class="k">import</span> <span class="b1">{</span> <span class="v">ContentProjectionComponent</span> <span class="b1">}</span> <span class="k">from</span> <span class="s">'./components/component<i class="hy">-</i>template/content<i class="hy">-</i>projection/content<i class="hy">-</i>projection.component'</span>;</div>
<div class="ln mono" style="left:812px;top:1374px">18</div>
<div class="cl mono" style="left:944.7px;top:1374px"><span class="k">import</span> <span class="b1">{</span> <span class="v">ErrorHandlingComponent</span> <span class="b1">}</span> <span class="k">from</span> <span class="s">'./components/component<i class="hy">-</i>template/error<i class="hy">-</i>handling/error<i class="hy">-</i>handling.component'</span>;</div>
<div class="ln mono" style="left:812px;top:1410px">19</div>
<div class="cl mono" style="left:944.7px;top:1410px"><span class="k">import</span> <span class="b1">{</span> <span class="v">GlobalStylesComponent</span> <span class="b1">}</span> <span class="k">from</span> <span class="s">'./components/component<i class="hy">-</i>template/global<i class="hy">-</i>styles/global<i class="hy">-</i>styles.component'</span>;</div>
<div class="ln mono" style="left:812px;top:1446px">20</div>
<div class="cl mono" style="left:944.7px;top:1446px"><span class="k">import</span> <span class="b1">{</span> <span class="v">StructuralDirectivesComponent</span> <span class="b1">}</span> <span class="k">from</span> <span class="s">'./components/directive/build<i class="hy">-</i>in/structural<i class="hy">-</i>directives/structural<i class="hy">-</i>directives.component'</span>;</div>
<div class="ln mono" style="left:812px;top:1482px">21</div>
<div class="cl mono" style="left:944.7px;top:1482px"><span class="k">import</span> <span class="b1">{</span> <span class="v">AttributeDirectivesComponent</span> <span class="b1">}</span> <span class="k">from</span> <span class="s">'./components/directive/build<i class="hy">-</i>in/attribute<i class="hy">-</i>directives/attribute<i class="hy">-</i>directives.component'</span>;</div>
<div class="ln mono" style="left:812px;top:1518px">22</div>
<div class="cl mono" style="left:944.7px;top:1518px"><span class="k">import</span> <span class="b1">{</span> <span class="v">CustomDirective</span> <span class="b1">}</span> <span class="k">from</span> <span class="s">'./components/directive/custom/custom.directive'</span>;</div>
<div class="ln mono" style="left:812px;top:1554px">23</div>
<div class="cl mono" style="left:944.7px;top:1554px"><span class="k">import</span> <span class="b1">{</span> <span class="v">PipeComponent</span> <span class="b1">}</span> <span class="k">from</span> <span class="s">'./components/pipe/pipe/pipe.component'</span>;</div>
<div class="ln mono" style="left:812px;top:1590px">24</div>
<div class="cl mono" style="left:944.7px;top:1590px"><span class="k">import</span> <span class="b1">{</span> <span class="v">CustomPipe</span> <span class="b1">}</span> <span class="k">from</span> <span class="s">'./components/pipe/custom/custom.pipe'</span>;</div>
<div class="ln mono" style="left:812px;top:1626px">25</div>
<div class="ln mono" style="left:812px;top:1662px">26</div>
<div class="cl mono" style="left:944.7px;top:1662px"><span class="c">// 调用NgModule装饰器，告诉Angular 当前类表示的是Angular模块</span></div>
<div class="ln mono" style="left:812px;top:1698px">27</div>
<div class="cl mono" style="left:944.7px;top:1698px">@<span class="t">NgModule</span><span class="b1">(</span><span class="b2">{</span></div>
<div class="ln mono" style="left:812px;top:1734px">28</div>
<div class="cl mono" style="left:944.7px;top:1734px">  <span class="c">// 声明当前模块拥有哪些组建</span></div>
<div class="ig" style="left:944px;top:1733px;height:36px"></div>
</div></div>
<div style="left:812px;top:1022px;width:2212px;height:44px;background:#1d1d1d;box-shadow:0 6px 6px -4px rgba(0,0,0,.55)"></div>
<div class="bc" id="b2a" style="left:844.7px;top:1022px;letter-spacing:0.85px;">src</div>
<div class="bc" id="b2b" style="left:913px;top:1022px;letter-spacing:1.85px;">app</div>
<div class="bc" id="b2c" style="left:1035px;top:1022px;letter-spacing:0.767px;">app.module.ts</div>
<div class="bc" id="b2d" style="left:1277.8px;top:1022px;letter-spacing:0.85px;">AppModule</div>
<svg class="a" style="left:891.9px;top:1034.5px" width="12" height="21" viewBox="0 0 12 21" fill="none" stroke="#a9a9a9" stroke-width="1.9"><path d="M1.2 1.2L10.4 10.5L1.2 19.8"/></svg>
<svg class="a" style="left:969.6px;top:1034.5px" width="12" height="21" viewBox="0 0 12 21" fill="none" stroke="#a9a9a9" stroke-width="1.9"><path d="M1.2 1.2L10.4 10.5L1.2 19.8"/></svg>
<svg class="a" style="left:1218px;top:1034.5px" width="12" height="21" viewBox="0 0 12 21" fill="none" stroke="#a9a9a9" stroke-width="1.9"><path d="M1.2 1.2L10.4 10.5L1.2 19.8"/></svg>
<span class="a" style="left:998px;top:1021px;line-height:44px;color:#519aba;font-size:20px;letter-spacing:-.9px;-webkit-text-stroke:.8px">TS</span>
<svg class="a" style="left:1238.8px;top:1028px" width="32" height="32" viewBox="0 0 16 16" fill="#ee9d28"><path d="M11.34 9.71h.71l2.67-2.67v-.71L13.38 5h-.7l-1.82 1.81h-5V5.56l1.86-1.85V3l-2-2H5L1 5v.71l2 2h.71l1.14-1.15v5.79l.5.5H10v.52l1.33 1.34h.71l2.67-2.67v-.71L13.37 11h-.7l-1.86 1.85h-5v-5H10v.48l1.34 1.38zm1.69-3.65l.63.63-2 2-.63-.63 2-2zm0 6l.63.63-2 2-.63-.63 2-2zM3.35 6.650l-1.290-1.300 3.290-3.290 1.300 1.290-3.300 3.300z"/></svg>
<div style="left:2757px;top:1066px;width:240px;height:694px;background:#1d1d1d;box-shadow:-6px 0 6px -4px rgba(0,0,0,.55)"></div>
<div class="mm mono" style="left:2764px;top:1066px;width:232px;height:694px"><div><span class="c">// BrowserModule 浏览器解析的模块，提供浏览器核心功能</span></div><div><span class="c">// CommonModule 提供各种服务、指令，例如 ngIf 和 ngFor 等常用指令</span></div><div><span class="c">// BrowserModule 重新导出了 CommonModule，所以根模块只需导入 BrowserModule，其他模块导入 CommonModule 即可使用</span></div><div><span class="k">import</span> <span class="b1">{</span> <span class="v">BrowserModule</span> <span class="b1">}</span> <span class="k">from</span> <span class="s">'@angular/platform-browser'</span>;</div><div><span class="k">import</span> <span class="b1">{</span> <span class="v">NgModule</span> <span class="b1">}</span> <span class="k">from</span> <span class="s">'@angular/core'</span>;</div><div><span class="c">// NgModule: Angular 模块装饰器，用来定义模块</span></div><div><span class="k">import</span> <span class="b1">{</span> <span class="v">AppRoutingModule</span> <span class="b1">}</span> <span class="k">from</span> <span class="s">'./app-routing.module'</span>;</div><div><span class="c">// 根组件</span></div><div><span class="k">import</span> <span class="b1">{</span> <span class="v">AppComponent</span> <span class="b1">}</span> <span class="k">from</span> <span class="s">'./app.component'</span>;</div><div><span class="k">import</span> <span class="b1">{</span> <span class="v">SharedModule</span> <span class="b1">}</span> <span class="k">from</span> <span class="s">'./shared/shared.module'</span>;</div><div><span class="k">import</span> <span class="b1">{</span> <span class="v">DataBindingComponent</span> <span class="b1">}</span> <span class="k">from</span> <span class="s">'./components/component-template/data-binding/data-binding.component'</span>;</div><div><span class="k">import</span> <span class="b1">{</span> <span class="v">PropertyBindingComponent</span> <span class="b1">}</span> <span class="k">from</span> <span class="s">'./components/component-template/property-binding/property-binding.component'</span>;</div><div><span class="k">import</span> <span class="b1">{</span> <span class="v">EventBindingComponent</span> <span class="b1">}</span> <span class="k">from</span> <span class="s">'./components/component-template/event-binding/event-binding.component'</span>;</div><div><span class="k">import</span> <span class="b1">{</span> <span class="v">AccessNativeDomObjectsComponent</span> <span class="b1">}</span> <span class="k">from</span> <span class="s">'./components/component-template/access-native-dom-objects/access-native-dom-objects.component'</span>;</div><div><span class="k">import</span> <span class="b1">{</span> <span class="v">TwoWayDataBindingComponent</span> <span class="b1">}</span> <span class="k">from</span> <span class="s">'./components/component-template/two-way-data-binding/two-way-data-binding.component'</span>;</div><div><span class="k">import</span> <span class="b1">{</span> <span class="v">FormsModule</span> <span class="b1">}</span> <span class="k">from</span> <span class="s">'@angular/forms'</span>;</div><div><span class="k">import</span> <span class="b1">{</span> <span class="v">ContentProjectionComponent</span> <span class="b1">}</span> <span class="k">from</span> <span class="s">'./components/component-template/content-projection/content-projection.component'</span>;</div><div><span class="k">import</span> <span class="b1">{</span> <span class="v">ErrorHandlingComponent</span> <span class="b1">}</span> <span class="k">from</span> <span class="s">'./components/component-template/error-handling/error-handling.component'</span>;</div><div><span class="k">import</span> <span class="b1">{</span> <span class="v">GlobalStylesComponent</span> <span class="b1">}</span> <span class="k">from</span> <span class="s">'./components/component-template/global-styles/global-styles.component'</span>;</div><div><span class="k">import</span> <span class="b1">{</span> <span class="v">StructuralDirectivesComponent</span> <span class="b1">}</span> <span class="k">from</span> <span class="s">'./components/directive/build-in/structural-directives/structural-directives.component'</span>;</div><div><span class="k">import</span> <span class="b1">{</span> <span class="v">AttributeDirectivesComponent</span> <span class="b1">}</span> <span class="k">from</span> <span class="s">'./components/directive/build-in/attribute-directives/attribute-directives.component'</span>;</div><div><span class="k">import</span> <span class="b1">{</span> <span class="v">CustomDirective</span> <span class="b1">}</span> <span class="k">from</span> <span class="s">'./components/directive/custom/custom.directive'</span>;</div><div><span class="k">import</span> <span class="b1">{</span> <span class="v">PipeComponent</span> <span class="b1">}</span> <span class="k">from</span> <span class="s">'./components/pipe/pipe/pipe.component'</span>;</div><div><span class="k">import</span> <span class="b1">{</span> <span class="v">CustomPipe</span> <span class="b1">}</span> <span class="k">from</span> <span class="s">'./components/pipe/custom/custom.pipe'</span>;</div><div> </div><div><span class="c">// 调用NgModule装饰器，告诉Angular 当前类表示的是Angular模块</span></div><div>@<span class="t">NgModule</span><span class="b1">(</span><span class="b2">{</span></div><div>  <span class="c">// 声明当前模块拥有哪些组建</span></div><div>  <span class="v">declarations:</span> <span class="b3">[</span></div><div>    <span class="t">AppComponent</span>,</div><div>    <span class="t">DataBindingComponent</span>,</div><div>    <span class="t">PropertyBindingComponent</span>,</div><div>    <span class="t">EventBindingComponent</span>,</div><div>    <span class="t">AccessNativeDomObjectsComponent</span>,</div><div>    <span class="t">TwoWayDataBindingComponent</span>,</div><div>    <span class="t">ContentProjectionComponent</span>,</div><div>    <span class="t">ErrorHandlingComponent</span>,</div><div>    <span class="t">GlobalStylesComponent</span>,</div><div>    <span class="t">StructuralDirectivesComponent</span>,</div><div>    <span class="t">AttributeDirectivesComponent</span>,</div><div>    <span class="t">CustomDirective</span>,</div><div>    <span class="t">PipeComponent</span>,</div><div>    <span class="t">CustomPipe</span>,<span class="c">// 自定义管道需要声明</span></div><div>  <span class="b3">]</span>,</div><div>  <span class="c">// 声明当前模块依赖了哪些其他模块</span></div><div>  <span class="v">imports:</span> <span class="b3">[</span></div><div>    <span class="t">BrowserModule</span>,</div><div>    <span class="t">AppRoutingModule</span>,</div><div>    <span class="t">SharedModule</span>,</div><div>    <span class="t">FormsModule</span></div><div>  <span class="b3">]</span>,</div><div>  <span class="c">// 声明服务的作用域，数组中接收服务类，表示该服务只能在当前模块的组件中使用</span></div><div>  <span class="v">providers:</span> <span class="b3">[]</span>,</div><div>  <span class="c">// 可引导组件，Angular 会在引导过程中把加载到 DOM 中</span></div><div>  <span class="v">bootstrap:</span> <span class="b3">[</span><span class="t">AppComponent</span><span class="b3">]</span>,</div><div><span class="b2">}</span><span class="b1">)</span></div><div><span class="k">export</span> <span class="kw">class</span> <span class="t">AppModule</span> <span class="b1">{ }</span></div></div>
<div style="left:2996px;top:1066px;width:28px;height:694px;border-left:2px solid #171717;border-top:2px solid #171717;background:#1d1d1d"></div>
<div style="left:2997px;top:1445px;width:27px;height:4px;background:#8a8a8a"></div>
<div style="left:812px;top:1760px;width:2212px;height:380px;background:#171717;border-top:2px solid #272727"></div>
<div class="pt" id="pt_PRO" style="left:852.5px;color:#9d9d9d;letter-spacing:-0.3px">PROBLEMS</div>
<div class="pt" id="pt_OUT" style="left:1020.5px;color:#9d9d9d;letter-spacing:0.1px">OUTPUT</div>
<div class="pt" id="pt_DEB" style="left:1160px;color:#9d9d9d;letter-spacing:-0.175px">DEBUG CONSOLE</div>
<div class="pt" id="pt_COM" style="left:1398px;color:#9d9d9d;letter-spacing:0.2px">COMMENTS</div>
<div class="pt" id="pt_POR" style="left:1576px;color:#9d9d9d;letter-spacing:-0.425px">PORTS</div>
<div class="pt" id="pt_TER" style="left:1697.5px;color:#e7e7e7;letter-spacing:-0.229px">TERMINAL</div>
<div style="left:1693px;top:1817px;width:119px;height:2px;background:#0078d4"></div>
<svg class="a" style="left:2770px;top:1780px" width="240" height="36" viewBox="2770 1780 240 36" fill="none" stroke="#ccc" stroke-width="2"><path d="M2795 1784v25M2782.5 1796.5h25"/><path d="M2821 1793.5l7 7 7-7" stroke-width="1.8"/><g fill="#ccc" stroke="none"><circle cx="2864" cy="1797" r="2.2"/><circle cx="2874" cy="1797" r="2.2"/><circle cx="2884" cy="1797" r="2.2"/></g><path d="M2916 1801l10-10 10 10"/><path d="M2969.5 1788l17 17M2986.5 1788l-17 17"/></svg>
<div style="left:1272px;top:1832px;width:546px;height:28px;background:#383a3f"></div>
<div class="tl2 mono" style="left:852px;top:1832px;letter-spacing:-.45px"><b style="color:#23d18b">➜</b>  <b style="color:#29b8db">angular<i class="hy">-</i>study</b> <b style="color:#3b8eea">git:(</b><b style="color:#f14c4c">main</b><b style="color:#3b8eea">)</b> <b style="color:#f5f543">✗</b> ng g p components/pipe/custom/custom</div>
<div class="tl2 mono" style="left:852px;top:1860px;letter-spacing:-.45px"><span style="color:#0dbc79">CREATE</span> src/app/components/pipe/custom/custom.pipe.spec.ts (187 bytes)</div>
<div class="tl2 mono" style="left:852px;top:1888px;letter-spacing:-.45px"><span style="color:#0dbc79">CREATE</span> src/app/components/pipe/custom/custom.pipe.ts (217 bytes)</div>
<div class="tl2 mono" style="left:852px;top:1916px;letter-spacing:-.45px"><span style="color:#11a8cd">UPDATE</span> src/app/app.module.ts (3073 bytes)</div>
<div class="tl2 mono" style="left:852px;top:1944px;letter-spacing:-.45px"><b style="color:#23d18b">➜</b>  <b style="color:#29b8db">angular<i class="hy">-</i>study</b> <b style="color:#3b8eea">git:(</b><b style="color:#f14c4c">main</b><b style="color:#3b8eea">)</b> <b style="color:#f5f543">✗</b> </div>
<div style="left:826px;top:1838px;width:16px;height:16px;border-radius:50%;background:#1b81a8"></div>
<div style="left:826px;top:1950px;width:16px;height:16px;border-radius:50%;border:2.6px solid #5a5a5a"></div>
<div style="left:1272px;top:1944px;width:14px;height:28px;border:2px solid #ccc"></div>
<div style="left:2568px;top:1830px;width:2px;height:310px;background:#101010"></div>
<div style="left:2569px;top:1832px;width:9px;height:6px;background:#1b81a8"></div>
<div style="left:2569px;top:1938px;width:9px;height:12px;background:#5a5a5a"></div>
<div style="left:2596px;top:1830px;width:2px;height:310px;background:#272727"></div>
<div style="left:2598px;top:1874px;width:426px;height:44px;background:#313036;border-left:2px solid #0078d4"></div>
<svg class="a" style="left:2620px;top:1838px" width="28" height="28" viewBox="0 0 28 28" fill="none" stroke="#ccc" stroke-width="2"><rect x="1" y="1" width="26" height="26" rx="2.5"/><path d="M7 8.5l6 5.5-6 5.5M14.5 20h7" stroke-width="1.9"/></svg>
<svg class="a" style="left:2620px;top:1882px" width="28" height="28" viewBox="0 0 28 28" fill="none" stroke="#ccc" stroke-width="2"><rect x="1" y="1" width="26" height="26" rx="2.5"/><path d="M7 8.5l6 5.5-6 5.5M14.5 20h7" stroke-width="1.9"/></svg>
<div id="tn" style="left:2657px;top:1830px;line-height:44px;font-size:26px;color:#ccc;letter-spacing:1.1px">node</div>
<div id="tz" style="left:2657px;top:1874px;line-height:44px;font-size:26px;color:#ccc;letter-spacing:1.35px">zsh</div>
<div id="st"></div>
<div style="left:112px;top:2142px;width:68px;height:42px;background:#0078d4"></div>
<svg class="a" style="left:136px;top:2151px" width="22" height="24" viewBox="0 0 22 24" fill="none" stroke="#fff" stroke-width="2"><path d="M1.5 8.5l7 6.5-7 6.5M19.5 2.5l-7 6.5 7 6.5"/></svg>
<svg class="a" style="left:198px;top:2151px" width="26" height="24" viewBox="0 0 26 24" fill="none" stroke="#ccc" stroke-width="1.9" stroke-linejoin="miter"><path d="M1.5 2v20l15-10zM8.5 2l15 10-15 10"/></svg>
<div class="si" id="st0" style="left:238px;letter-spacing:0.517px">Run Testcases</div>
<svg class="a" style="left:434px;top:2150px" width="26" height="26" viewBox="0 0 26 26" fill="none" stroke="#ccc" stroke-width="1.9"><circle cx="13" cy="13" r="11.5"/><path d="M8.2 8.2l9.6 9.6M17.8 8.2l-9.6 9.6"/></svg>
<div class="si" id="st1" style="left:468px;letter-spacing:-3.65px">0</div>
<svg class="a" style="left:491px;top:2150px" width="26" height="25" viewBox="0 0 26 25" fill="none" stroke="#ccc" stroke-width="1.9" stroke-linejoin="round"><path d="M13 2L24.5 23h-23zM13 9.5v7.5M13 19v2.2"/></svg>
<div class="si" id="st2" style="left:525.5px;letter-spacing:-0.15px">0</div>
<svg class="a" style="left:574px;top:2150px" width="24" height="26" viewBox="0 0 24 26" fill="none" stroke="#ccc" stroke-width="1.8"><circle cx="12" cy="9" r="2.2"/><path d="M12 11.5L7 25M12 11.5L17 25M8.6 20.5h6.8M7.5 13.5a6.4 6.4 0 0 1 0-9M16.5 13.5a6.4 6.4 0 0 0 0-9M4.3 16.3a10.6 10.6 0 0 1 0-14.6M19.7 16.3a10.6 10.6 0 0 0 0-14.6"/></svg>
<div class="si" id="st3" style="left:607px;letter-spacing:-2.65px">0</div>
<div class="si" id="st4" style="left:654px;letter-spacing:1.169px">-- NORMAL --</div>
<div class="si" id="st5" style="left:2241px;letter-spacing:0.759px">Ln 13, Col 1</div>
<div class="si" id="st6" style="left:2411.5px;letter-spacing:0.725px">Spaces: 2</div>
<div class="si" id="st7" style="left:2556px;letter-spacing:1.35px">UTF-8</div>
<div class="si" id="st8" style="left:2660px;letter-spacing:1.35px">LF</div>
<div class="si" style="left:2718px;letter-spacing:6.5px;font-size:21px;-webkit-text-stroke:0;top:2141px">{}</div>
<div class="si" id="st9" style="left:2756.5px;letter-spacing:0.851px">TypeScript</div>
<svg class="a" style="left:2906px;top:2151.5px" width="28.5" height="25" viewBox="0 0 33 29"><path d="M4.5 11.5C1.2 13.6 0 16.6 0 19.8C0 25 7.6 29 16.5 29C25.4 29 33 25 33 19.8C33 16.6 31.8 13.6 28.5 11.5Z" fill="#ccc"/><path d="M6.5 15.2H26.2V21.6C21.8 25.4 10.9 25.4 6.5 21.6Z" fill="#171717"/><rect x="11.5" y="16.9" width="2.9" height="5.9" rx="1.45" fill="#ccc"/><rect x="18.9" y="16.9" width="2.9" height="5.9" rx="1.45" fill="#ccc"/><rect x="5.2" y="1.7" width="10.2" height="11.2" rx="4.6" fill="#171717" stroke="#ccc" stroke-width="3.3"/><rect x="17.8" y="1.7" width="10.2" height="11.2" rx="4.6" fill="#171717" stroke="#ccc" stroke-width="3.3"/></svg>
<svg class="a" style="left:2966px;top:2146px" width="30" height="30" viewBox="2966 2146 30 30" fill="none" stroke="#ccc" stroke-width="2"><path d="M2970.4 2170.3h20.6M2973.7 2170V2162a7.7 7.7 0 0 1 8.6-8.4M2988.4 2163.5v6.5"/><path d="M2977.6 2171.6a2.7 2.7 0 0 0 5.4 0z" fill="#ccc" stroke="none"/><circle cx="2986.6" cy="2155.4" r="5" fill="#ccc" stroke="none"/></svg>
</div></div>
</body></html>
